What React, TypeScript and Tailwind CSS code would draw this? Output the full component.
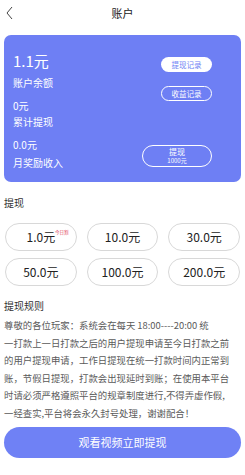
import React from "react";

export default function App() {
  const amounts = ["1.0元", "10.0元", "30.0元", "50.0元", "100.0元", "200.0元"];
  const lines = [
    "尊敬的各位玩家：系统会在每天 18:00----20:00 统",
    "一打款上一日打款之后的用户提现申请至今日打款之前",
    "的用户提现申请，工作日提现在统一打款时间内正常到",
    "账，节假日提现，打款会出现延时到账；在使用本平台",
    "时请必须严格遵照平台的规章制度进行,不得弄虚作假,",
    "一经查实,平台将会永久封号处理，谢谢配合！",
  ];
  return (
    <div
      className="w-[245px] h-[475px] bg-white overflow-hidden relative"
      style={{ fontFamily: '"Noto Sans CJK SC", "Noto Sans", sans-serif' }}
    >
      {/* header */}
      <div className="h-[26px] relative flex items-center justify-center">
        <svg className="absolute left-[5px] top-[6px]" width="9" height="14" viewBox="0 0 9 14">
          <path d="M7 1 L2 7 L7 13" fill="none" stroke="#444" strokeWidth="1" />
        </svg>
        <span className="text-[11px] text-[#222] leading-none">账户</span>
      </div>

      {/* card */}
      <div className="mx-[4px] mt-[9px] h-[147px] rounded-[7px] bg-[#6e7ff4] flex justify-between text-white">
        <div className="pl-[9px] pt-[16px] flex flex-col">
          <div className="h-[20px] leading-[20px] text-[15px]">1.1元</div>
          <div className="mt-[5px] h-[14px] leading-[14px] text-[10px]">账户余额</div>
          <div className="mt-[9px] h-[14px] leading-[14px] text-[10px]">0元</div>
          <div className="mt-[2px] h-[14px] leading-[14px] text-[10px]">累计提现</div>
          <div className="mt-[9px] h-[14px] leading-[14px] text-[10px]">0.0元</div>
          <div className="mt-[4px] h-[14px] leading-[14px] text-[10px]">月奖励收入</div>
        </div>
        <div className="pr-[29px] pt-[22px] flex flex-col items-end">
          <div className="w-[51px] h-[15px] rounded-full bg-white text-[#6e7ff4] text-[7.5px] flex items-center justify-center">
            提现记录
          </div>
          <div className="mt-[14px] w-[51px] h-[15px] rounded-full border border-white text-white text-[7.5px] flex items-center justify-center">
            收益记录
          </div>
          <div className="mt-[44px] w-[70px] h-[22px] rounded-full border border-white text-white flex flex-col items-center justify-center">
            <span className="text-[8px] leading-[10px]">提现</span>
            <span className="text-[6px] leading-[8px]">1000元</span>
          </div>
        </div>
      </div>

      {/* 提现 */}
      <div className="mt-[14px] pl-[4px] h-[14px] leading-[14px] text-[10px] text-[#333]">提现</div>
      <div className="mt-[13px] px-[5px] grid grid-cols-3 gap-x-[10px] gap-y-[7px]">
        {amounts.map((a, i) => (
          <div
            key={a}
            className="relative h-[28px] rounded-full border border-[#d8d8d8] flex items-center justify-center text-[12px] text-[#222]"
          >
            {a}
            {i === 0 && (
              <span className="absolute left-[49px] top-[6px] text-[4.5px] leading-none text-[#e0455a]">今日割</span>
            )}
          </div>
        ))}
      </div>

      {/* 规则 */}
      <div className="mt-[13px] pl-[4px] h-[14px] leading-[14px] text-[10px] text-[#333]">提现规则</div>
      <div className="mt-[4px] pl-[4px] text-[9.4px] leading-[17.6px] text-[#5a5a5a] whitespace-nowrap">
        {lines.map((l) => (
          <div key={l}>{l}</div>
        ))}
      </div>

      {/* bottom button */}
      <div className="mx-[4px] mt-[4px] h-[31px] rounded-full bg-[#6f81f5] text-white text-[11px] flex items-center justify-center">
        观看视频立即提现
      </div>
    </div>
  );
}
